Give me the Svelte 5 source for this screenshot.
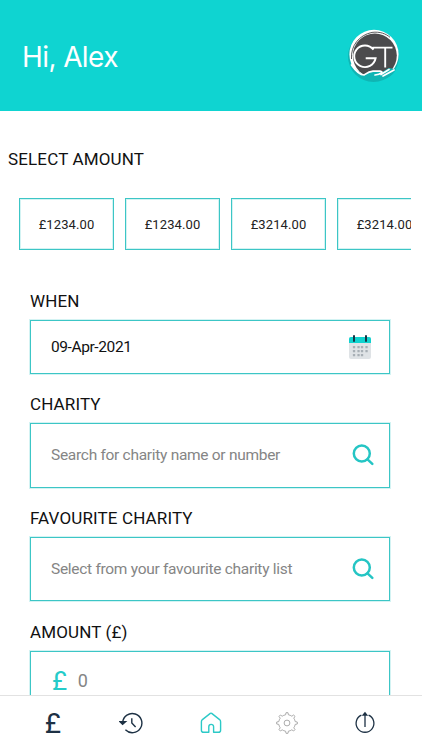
<script>
	let name = 'Alex';
	let amounts = ['1234.00', '1234.00', '3214.00', '3214.00'];
	let date = '09-Apr-2021';
	let days = [
		[6, 13], [10.5, 13], [14, 13], [18.5, 13],
		[6, 17], [10.5, 17], [14, 17], [18.5, 17],
		[6, 21], [10.5, 21], [14, 21]
	];
</script>

{#snippet searchIcon()}
	<svg class="search" width="22" height="22" viewBox="0 0 22 22">
		<circle cx="9.8" cy="9.5" r="8" />
		<path d="M15.5 15.4L20.3 19.8" />
	</svg>
{/snippet}

<div class="app">
	<header>
		<h1>Hi, {name}</h1>
		<svg class="logo" width="54" height="54" viewBox="0 0 54 54">
			<circle cx="26.5" cy="27.5" r="25.5" fill="#10b5b4" />
			<circle cx="27" cy="25.4" r="24.6" fill="#fff" />
			<circle cx="27.8" cy="26.6" r="22" fill="#4b4b4d" />
			<path d="M4.5 30C3.5 17 12 6 25 3.4C33 2.4 39 4.8 43 8.3" fill="none" stroke="#4b4b4d" stroke-width="0.9" />
			<path d="M7 39C10 41 13 45 17 46C20 45 22 42 26 42L35 43L42 39L47 40L49 40C43 55 14 56 5 39Z" fill="#10b5b4" />
			<path d="M4.5 36C8 41 13 46 17 46C20 44 22 42.5 26 42.2L33 42C37 42.5 34 45 28 46M34 45.5L42 40.5M36 47L47 41" fill="none" stroke="#fff" stroke-width="1.7" stroke-linecap="round" stroke-linejoin="round" />
			<path d="M26.5 20.6A10.8 10.8 0 1 0 28.6 29.3H18.7M25.5 18.6H45.5M38.2 18.6V38.5" fill="none" stroke="#fff" stroke-width="1.9" />
		</svg>
	</header>

	<main>
		<h2>SELECT AMOUNT</h2>
		<div class="amounts">
			{#each amounts as amount}
				<button class="amount">£{amount}</button>
			{/each}
		</div>

		<div class="form">
			<div class="label">WHEN</div>
			<div class="field date">
				<span>{date}</span>
				<svg class="calendar" width="24" height="26" viewBox="0 0 24 26">
					<rect x="1" y="3" width="22" height="22" rx="2" fill="#dfe3e6" />
					<path d="M1 9V5a2 2 0 0 1 2-2h18a2 2 0 0 1 2 2v4z" fill="#10d3cf" />
					<path d="M6 2v5M18 2v5" stroke="#173646" stroke-width="2" stroke-linecap="round" />
					{#each days as [x, y]}
						<rect x={x - 1.1} y={y - 1.1} width="2.3" height="2.3" rx="0.5" fill="#a7afb5" />
					{/each}
				</svg>
			</div>

			<div class="label">CHARITY</div>
			<div class="field">
				<span class="placeholder">Search for charity name or number</span>
				{@render searchIcon()}
			</div>

			<div class="label">FAVOURITE CHARITY</div>
			<div class="field">
				<span class="placeholder">Select from your favourite charity list</span>
				{@render searchIcon()}
			</div>

			<div class="label">AMOUNT (£)</div>
			<div class="field money">
				<span class="pound">£</span>
				<span class="zero">0</span>
			</div>
		</div>
	</main>

	<nav>
		<button class="tab" aria-label="Donate"><span class="navPound">£</span></button>
		<button class="tab" aria-label="History">
			<svg width="24" height="24" viewBox="0 0 24 24" fill="none" stroke="#1d3144" stroke-width="1.4">
				<path d="M3.7 11.4A9.6 9.6 0 1 1 6.4 18.8" />
				<path d="M0.8 10.6L3.6 13.4L6.6 10.6Z" fill="#1d3144" />
				<path d="M12.8 7.3V12L16.6 16" />
			</svg>
		</button>
		<button class="tab home" aria-label="Home">
			<svg width="24" height="24" viewBox="0 0 24 24" fill="none" stroke="#2cc9c7" stroke-width="1.4" stroke-linejoin="round">
				<path d="M3.4 8.6L11.3 2.4Q12 1.9 12.7 2.4L20.6 8.6Q21.6 9.5 21.6 10.8V19.2Q21.6 21.3 19.5 21.3H14.6V15.8A2.4 2.4 0 0 0 9.8 15.8V21.3H4.5Q2.4 21.3 2.4 19.2V10.8Q2.4 9.5 3.4 8.6Z" />
			</svg>
		</button>
		<button class="tab" aria-label="Settings">
			<svg width="24" height="24" viewBox="-12 -12 24 24" fill="none" stroke="#a3a3a3" stroke-width="0.9" stroke-linejoin="round">
				<path d="M-1.4 -8.2L-1 -10.3H1L1.4 -8.2Q3.3 -7.9 4.8 -6.8L6.6 -8L8 -6.6L6.8 -4.8Q7.9 -3.3 8.2 -1.4L10.3 -1V1L8.2 1.4Q7.9 3.3 6.8 4.8L8 6.6L6.6 8L4.8 6.8Q3.3 7.9 1.4 8.2L1 10.3H-1L-1.4 8.2Q-3.3 7.9 -4.8 6.8L-6.6 8L-8 6.6L-6.8 4.8Q-7.9 3.3 -8.2 1.4L-10.3 1V-1L-8.2 -1.4Q-7.9 -3.3 -6.8 -4.8L-8 -6.6L-6.6 -8L-4.8 -6.8Q-3.3 -7.9 -1.4 -8.2Z" />
				<circle r="2.9" />
			</svg>
		</button>
		<button class="tab" aria-label="Log out">
			<svg width="24" height="24" viewBox="0 0 24 24" fill="none" stroke="#1d3144" stroke-width="1.3">
				<path d="M8.4 4.2A8.9 8.9 0 1 0 15.6 4.2M12 3.5V16" />
				<path d="M10.2 4L12 1.8L13.8 4Z" fill="#1d3144" />
			</svg>
		</button>
	</nav>
</div>

<style>
	:global(body) {
		margin: 0;
		overflow: hidden;
	}
	.app {
		display: flex;
		flex-direction: column;
		height: 750px;
		background: #fff;
		font-family: Roboto, sans-serif;
		color: #111;
	}
	header {
		flex: none;
		box-sizing: border-box;
		height: 111px;
		padding: 3px 21px 0 22px;
		display: flex;
		justify-content: space-between;
		align-items: center;
		background: #0fd4d1;
	}
	.logo {
		margin-top: -3px;
	}
	h1 {
		margin: 0;
		font-family: Inter, sans-serif;
		font-size: 28px;
		font-weight: 400;
		letter-spacing: -0.6px;
		color: #fff;
	}
	main {
		flex: 1;
		min-height: 0;
		overflow: hidden;
	}
	h2 {
		margin: 37px 0 0 8px;
		font-size: 17px;
		font-weight: 400;
		line-height: 22px;
		letter-spacing: 0.15px;
	}
	.amounts {
		display: flex;
		gap: 11px;
		margin: 28px 11px 0 19px;
		overflow: hidden;
	}
	.amount {
		flex: none;
		box-sizing: border-box;
		width: 95px;
		height: 52px;
		padding: 0;
		border: 1px solid #3cc6c6;
		box-shadow: inset 0 0 0 1px #d3f3f3;
		background: #fff;
		color: #222;
		font-family: Roboto, sans-serif;
		font-size: 13px;
		letter-spacing: 0.1px;
	}
	.form {
		padding: 40px 32px 0 30px;
	}
	.label {
		font-size: 17px;
		line-height: 22px;
		letter-spacing: 0.13px;
		margin-bottom: 8px;
	}
	.field {
		box-sizing: border-box;
		height: 64.5px;
		margin-bottom: 19.4px;
		padding: 0 15px 0 20px;
		border: 1px solid #3cc6c6;
		box-shadow: 0 0 0 1px #d3f3f3;
		display: flex;
		align-items: center;
		justify-content: space-between;
		font-size: 15.5px;
		letter-spacing: -0.4px;
	}
	.date {
		height: 54px;
		margin-bottom: 19px;
	}
	.calendar {
		margin-right: 2px;
	}
	.placeholder {
		color: #858585;
		letter-spacing: -0.29px;
	}
	.search {
		fill: none;
		stroke: #25c5c4;
		stroke-width: 2.5;
		stroke-linecap: round;
	}
	.money {
		justify-content: flex-start;
		gap: 11px;
		height: 60px;
		padding-left: 21px;
	}
	.pound {
		font-size: 26px;
		color: #25cbc9;
	}
	.zero {
		font-size: 18px;
		color: #858585;
	}
	nav {
		flex: none;
		box-sizing: border-box;
		height: 55px;
		padding: 0 18px 0 14px;
		border-top: 1px solid #e2e2e2;
		display: flex;
		background: #fff;
	}
	.tab {
		flex: 1;
		display: flex;
		align-items: center;
		justify-content: center;
		padding: 0;
		border: none;
		background: none;
	}
	.home svg {
		margin-left: 4px;
	}
	.navPound {
		font-family: Roboto, sans-serif;
		font-size: 28px;
		color: #1d3144;
	}
</style>
